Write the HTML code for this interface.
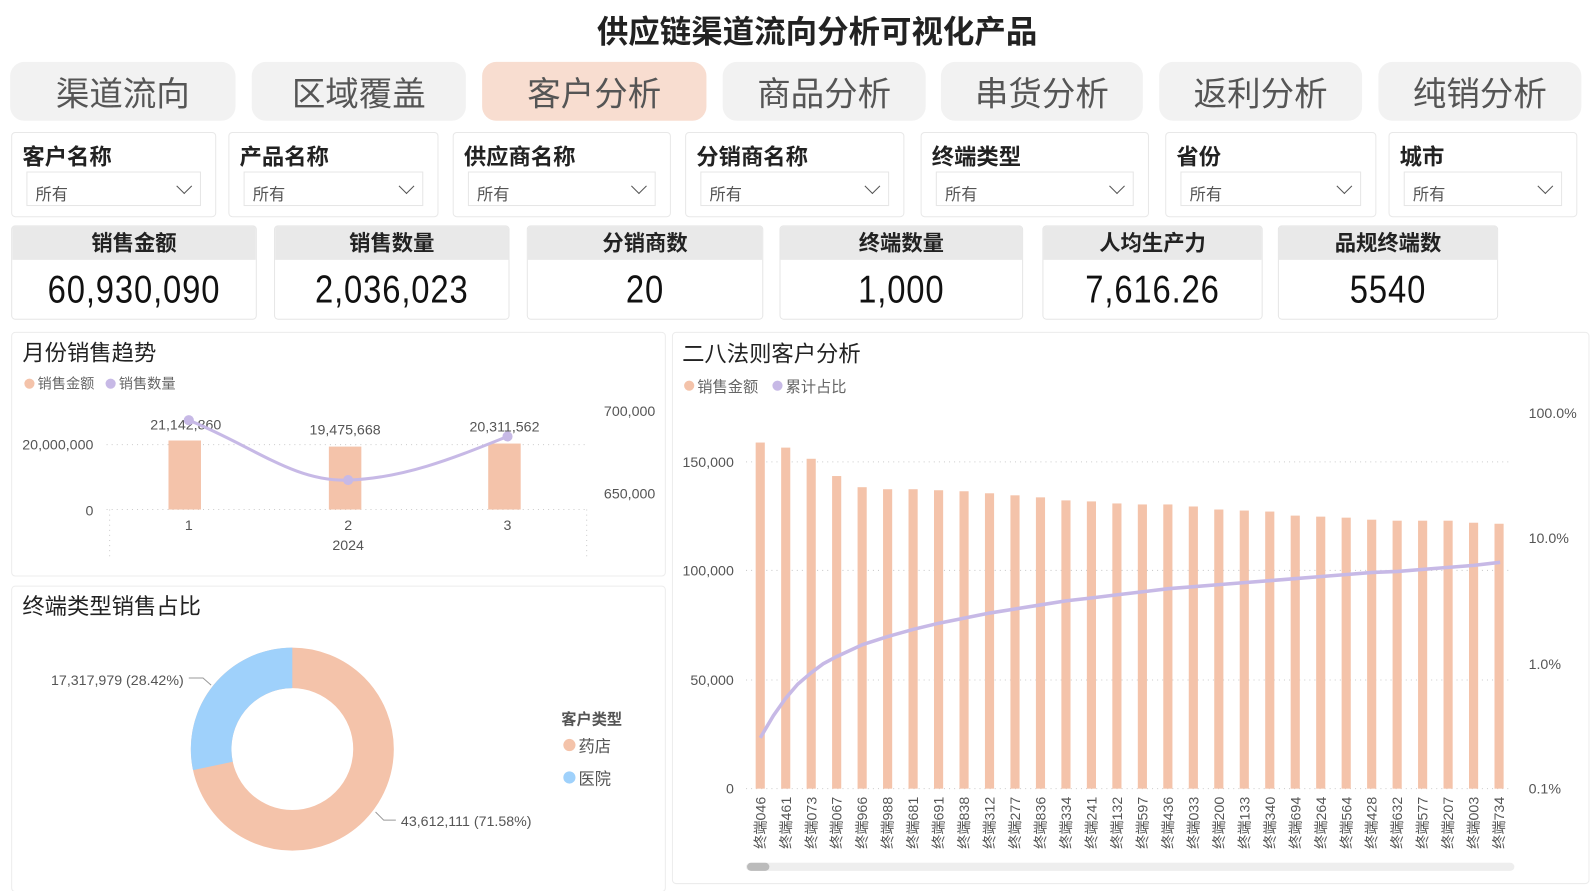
<!DOCTYPE html>
<html><head><meta charset="utf-8"><style>
*{box-sizing:border-box;margin:0;padding:0}
html,body{width:1591px;height:891px;overflow:hidden}
body{background:#fff;font-family:"Liberation Sans","Noto Sans CJK SC",sans-serif;position:relative;color:#333}
#w{position:absolute;left:0;top:0;width:1591px;height:891px;transform:scale(1.015);transform-origin:0 0}
.a{position:absolute}
.title{left:0;width:1591px;padding-left:19px;top:6px;text-align:center;font-size:31px;font-weight:bold;color:#222}
.tab{top:61px;height:58px;border-radius:14px;background:#f2f2f2;font-size:33px;color:#555;text-align:center;line-height:64px}
.flt{top:130px;height:84px;border:1px solid #e8e8e8;border-radius:4px;background:#fff}
.flt b{position:absolute;left:10px;top:6px;font-size:22px;color:#222}
.dd{position:absolute;left:14px;right:14px;top:38px;height:34px;border:1px solid #e6e6e6;font-size:16px;color:#555;padding:8px 8px}
.dd:after{content:"";position:absolute;right:10px;top:8px;width:10px;height:10px;border-right:1.5px solid #555;border-bottom:1.5px solid #555;transform:rotate(45deg)}
.kpi{top:222px;height:93px;border:1px solid #e6e6e6;border-radius:4px;background:#fff;overflow:hidden}
.kpi .h{height:33px;background:#e9e9e9;text-align:center;font-size:21px;font-weight:bold;line-height:36px;color:#222}
.kpi .v{text-align:center;font-size:38px;line-height:60px;color:#111;letter-spacing:1px;transform:scaleX(0.85)}
.panel{border:1px solid #ececec;border-radius:4px;background:#fff}
</style></head><body><div id="w">
<div class="a title">供应链渠道流向分析可视化产品</div>
<div class="a tab" style="left:10px;width:222px">渠道流向</div>
<div class="a tab" style="left:248px;width:211px">区域覆盖</div>
<div class="a tab" style="left:475px;width:221px;background:#f8ddd0">客户分析</div>
<div class="a tab" style="left:712px;width:200px">商品分析</div>
<div class="a tab" style="left:927px;width:199px">串货分析</div>
<div class="a tab" style="left:1142px;width:200px">返利分析</div>
<div class="a tab" style="left:1358px;width:200px">纯销分析</div>

<div class="a flt" style="left:11px;width:202px"><b>客户名称</b><div class="dd">所有</div></div>
<div class="a flt" style="left:225px;width:207px"><b>产品名称</b><div class="dd">所有</div></div>
<div class="a flt" style="left:446px;width:215px"><b>供应商名称</b><div class="dd">所有</div></div>
<div class="a flt" style="left:675px;width:216px"><b>分销商名称</b><div class="dd">所有</div></div>
<div class="a flt" style="left:907px;width:225px"><b>终端类型</b><div class="dd">所有</div></div>
<div class="a flt" style="left:1148px;width:208px"><b>省份</b><div class="dd">所有</div></div>
<div class="a flt" style="left:1368px;width:186px"><b>城市</b><div class="dd">所有</div></div>

<div class="a kpi" style="left:11px;width:242px"><div class="h">销售金额</div><div class="v">60,930,090</div></div>
<div class="a kpi" style="left:270px;width:232px"><div class="h">销售数量</div><div class="v">2,036,023</div></div>
<div class="a kpi" style="left:519px;width:233px"><div class="h">分销商数</div><div class="v">20</div></div>
<div class="a kpi" style="left:768px;width:240px"><div class="h">终端数量</div><div class="v">1,000</div></div>
<div class="a kpi" style="left:1027px;width:217px"><div class="h">人均生产力</div><div class="v">7,616.26</div></div>
<div class="a kpi" style="left:1259px;width:217px"><div class="h">品规终端数</div><div class="v">5540</div></div>

<div class="a panel" style="left:11px;top:327px;width:645px;height:241px"></div>
<div class="a panel" style="left:11px;top:577px;width:645px;height:302px"></div>
<div class="a panel" style="left:662px;top:327px;width:904px;height:544px"></div>

<svg class="a" style="left:0;top:0" width="1591" height="891" font-family="Liberation Sans,Noto Sans CJK SC,sans-serif">
<text x="22" y="355" font-size="22" fill="#222">月份销售趋势</text>
<circle cx="29" cy="378" r="5" fill="#f4c3aa"/><text x="37" y="383" font-size="14" fill="#666">销售金额</text>
<circle cx="109" cy="378" r="5" fill="#c7b9e6"/><text x="117" y="383" font-size="14" fill="#666">销售数量</text>
<g stroke="#ccc" stroke-dasharray="1,4"><line x1="105" y1="438" x2="580" y2="438"/><line x1="105" y1="502" x2="580" y2="502"/><line x1="108" y1="502" x2="108" y2="550"/><line x1="578" y1="502" x2="578" y2="550"/></g>
<g font-size="14" fill="#555"><text x="92" y="443" text-anchor="end">20,000,000</text><text x="92" y="508" text-anchor="end">0</text>
<text x="595" y="410">700,000</text><text x="595" y="491">650,000</text>
<text x="186" y="522" text-anchor="middle">1</text><text x="343" y="522" text-anchor="middle">2</text><text x="500" y="522" text-anchor="middle">3</text><text x="343" y="542" text-anchor="middle">2024</text>
<text x="183" y="423" text-anchor="middle">21,142,860</text><text x="340" y="428" text-anchor="middle">19,475,668</text><text x="497" y="425" text-anchor="middle">20,311,562</text></g>
<rect x="166" y="434" width="32" height="68" fill="#f4c3aa"/><rect x="324" y="440" width="32" height="62" fill="#f4c3aa"/><rect x="481" y="437" width="32" height="65" fill="#f4c3aa"/>
<path d="M186 414 C250 440 290 475 343 473 C400 471 450 450 500 430" stroke="#c7b9e6" stroke-width="3" fill="none"/>
<circle cx="186" cy="414" r="5" fill="#c7b9e6"/><circle cx="343" cy="473" r="5" fill="#c7b9e6"/><circle cx="500" cy="430" r="5" fill="#c7b9e6"/>

<text x="22" y="605" font-size="22" fill="#222">终端类型销售占比</text>
<circle cx="288" cy="738" r="80" fill="none" stroke="#f4c3aa" stroke-width="40"/>
<path d="M288 638 A100 100 0 0 0 190.2 758.8 L229.3 750.5 A60 60 0 0 1 288 678 Z" fill="#9fd1fb"/>
<path d="M186 668 L200 668 L208 675" stroke="#999" fill="none"/><text x="181" y="675" font-size="14" fill="#555" text-anchor="end">17,317,979 (28.42%)</text>
<path d="M370 800 L378 808 L390 808" stroke="#999" fill="none"/><text x="395" y="814" font-size="14" fill="#555">43,612,111 (71.58%)</text>
<text x="553" y="714" font-size="15" font-weight="bold" fill="#555">客户类型</text>
<circle cx="561" cy="734" r="6" fill="#f4c3aa"/><text x="570" y="741" font-size="16" fill="#555">药店</text>
<circle cx="561" cy="766" r="6" fill="#9fd1fb"/><text x="570" y="773" font-size="16" fill="#555">医院</text>

<text x="672" y="356" font-size="22" fill="#222">二八法则客户分析</text>
<circle cx="679" cy="380" r="5" fill="#f4c3aa"/><text x="687" y="386" font-size="15" fill="#666">销售金额</text>
<circle cx="766" cy="380" r="5" fill="#c7b9e6"/><text x="774" y="386" font-size="15" fill="#666">累计占比</text>
<g stroke="#ccc" stroke-dasharray="1,4"><line x1="735" y1="455" x2="1490" y2="455"/><line x1="735" y1="562" x2="1490" y2="562"/><line x1="735" y1="670" x2="1490" y2="670"/><line x1="735" y1="777" x2="1490" y2="777"/></g>
<g font-size="14" fill="#555" text-anchor="end"><text x="723" y="460">150,000</text><text x="723" y="567">100,000</text><text x="723" y="675">50,000</text><text x="723" y="782">0</text></g>
<g font-size="14" fill="#555"><text x="1506" y="412">100.0%</text><text x="1506" y="535">10.0%</text><text x="1506" y="659">1.0%</text><text x="1506" y="782">0.1%</text></g>
<g fill="#f4c3aa" id="bars"></g>
<g font-size="14" fill="#555" id="lbl"></g>
<path stroke="#c7b9e6" stroke-width="3.5" fill="none" d="M749 727 L762 705 774 688 786 674 799 663 811 654 824 647 837 641 850 635 875 627 900 620 925 614 950 609 975 604 1000 600 1025 596 1050 592 1076 589 1101 586 1126 583 1151 580 1176 578 1201 576 1226 574 1252 572 1277 570 1302 568 1327 566 1352 564 1377 563 1402 561 1427 559 1452 557 1478 554"/>
<rect x="735" y="850" width="757" height="8" rx="4" fill="#eee"/><rect x="736" y="850" width="22" height="8" rx="4" fill="#bbb"/>
</svg>
</div>
<script>
var tops=[436,441,452,469,480,482,482,483,484,486,488,490,493,494,496,497,497,499,502,503,504,508,509,510,512,513,513,513,515,516];
var n=["046","461","073","067","966","988","681","691","838","312","277","836","334","241","132","597","436","033","200","133","340","694","264","564","428","632","577","207","003","734"];
var b=document.getElementById('bars'),l=document.getElementById('lbl'),s='',t='';
for(var i=0;i<30;i++){var x=749+i*25.1;s+='<rect x="'+(x-4.5)+'" y="'+tops[i]+'" width="9" height="'+(777-tops[i])+'"/>';
t+='<text transform="translate('+(x+5)+',785) rotate(-90)" text-anchor="end">终端'+n[i]+'</text>';}
b.innerHTML=s;l.innerHTML=t;
</script>
</body></html>
